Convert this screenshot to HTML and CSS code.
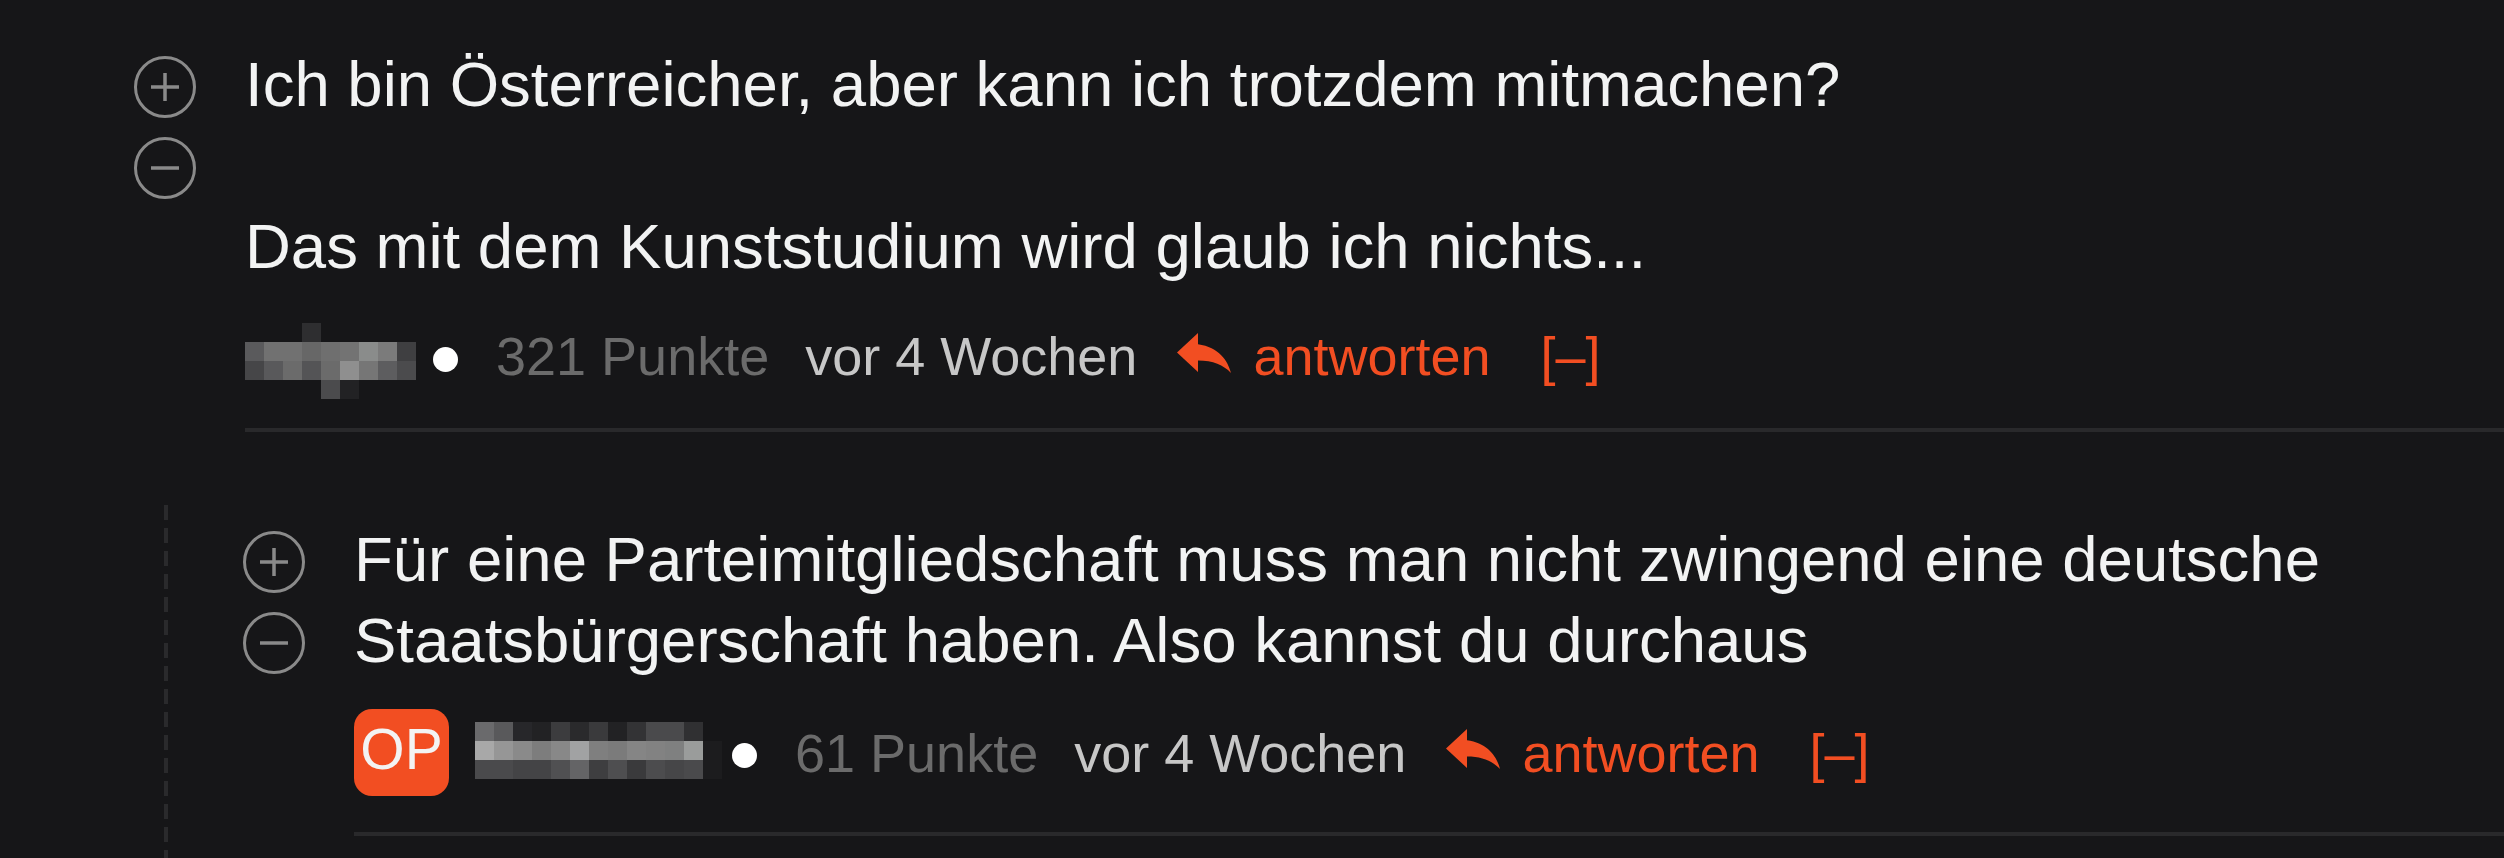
FILE: index.html
```html
<!DOCTYPE html>
<html lang="de">

<head>
    <meta charset="UTF-8">
    <title>Kommentare</title>
    <link rel="stylesheet" href="styles.css">
</head>

<body>
    <div class="thread">
        <div class="comment">
            <div class="comment-toggles">
                <button class="toggle" title="ausklappen">
                    <svg width="62" height="62" viewBox="0 0 62 62">
                        <circle cx="31" cy="31" r="29.5" />
                        <path d="M31 17v28M17 31h28" />
                    </svg>
                </button>
                <button class="toggle" title="einklappen">
                    <svg width="62" height="62" viewBox="0 0 62 62">
                        <circle cx="31" cy="31" r="29.5" />
                        <path d="M17 31h28" />
                    </svg>
                </button>
            </div>
            <div class="comment-body">
                <p>Ich bin Österreicher, aber kann ich trotzdem mitmachen?</p>
                <p>Das mit dem Kunststudium wird glaub ich nichts...</p>
                <div class="comment-meta">
                    <div class="user-blur user-a" data-user="0"></div>
                    <span class="meta-dot"></span>
                    <span class="points">321 Punkte</span>
                    <span class="time">vor 4 Wochen</span>
                    <a class="reply-link" href="#">
                        <svg width="54" height="40" viewBox="0 0 54 40">
                            <path d="M21 11.2V0L0 19.5L21 39V27.6C36 27.6 46.5 32.1 54 40C51 27.9 42 14 21 11.2Z" />
                        </svg>
                        <span>antworten</span>
                    </a>
                    <a class="collapse" href="#">[–]</a>
                </div>
            </div>
        </div>

        <div class="replies">
            <div class="comment reply">
                <div class="comment-toggles">
                    <button class="toggle" title="ausklappen">
                        <svg width="62" height="62" viewBox="0 0 62 62">
                            <circle cx="31" cy="31" r="29.5" />
                            <path d="M31 17v28M17 31h28" />
                        </svg>
                    </button>
                    <button class="toggle" title="einklappen">
                        <svg width="62" height="62" viewBox="0 0 62 62">
                            <circle cx="31" cy="31" r="29.5" />
                            <path d="M17 31h28" />
                        </svg>
                    </button>
                </div>
                <div class="comment-body">
                    <p>Für eine Parteimitgliedschaft muss man nicht zwingend eine deutsche<br>Staatsbürgerschaft haben. Also kannst du durchaus</p>
                    <div class="comment-meta">
                        <span class="op-badge">OP</span>
                        <div class="user-blur user-b" data-user="1"></div>
                        <span class="meta-dot"></span>
                        <span class="points">61 Punkte</span>
                        <span class="time">vor 4 Wochen</span>
                        <a class="reply-link" href="#">
                            <svg width="54" height="40" viewBox="0 0 54 40">
                                <path d="M21 11.2V0L0 19.5L21 39V27.6C36 27.6 46.5 32.1 54 40C51 27.9 42 14 21 11.2Z" />
                            </svg>
                            <span>antworten</span>
                        </a>
                        <a class="collapse" href="#">[–]</a>
                    </div>
                </div>
            </div>
        </div>
    </div>

    <script>
        // verpixelte Benutzernamen
        const pixels = [
            [
                ['', '', '', '#2e2e30', '', '', '', '', ''],
                ['#5a5a5c', '#717171', '#717171', '#676767', '#6f6f6f', '#737373', '#8a8c8b', '#7b7b7b', '#3f3f41'],
                ['#464648', '#59595b', '#6b6b6b', '#545456', '#6b6b6b', '#8f8f8f', '#767676', '#5d5d5f', '#4b4b4d'],
                ['', '', '', '', '#4b4b4d', '#222224', '', '', '']
            ],
            [
                ['#6a6a6c', '#59595b', '#27272a', '#222224', '#3c3c3e', '#2a2a2c', '#3a3a3c', '#222224', '#333335', '#4a4a4c', '#4a4a4c', '#303032', ''],
                ['#a8a8a8', '#969696', '#8a8a8a', '#7d7d7d', '#888888', '#a1a2a3', '#7f7f7f', '#7b7b7b', '#858585', '#828282', '#7f8080', '#9a9c9b', '#1c1c1e'],
                ['#4a4a4c', '#4a4a4c', '#444446', '#444446', '#505052', '#646466', '#3e3e40', '#4e4e50', '#3a3a3c', '#4c4c4e', '#464648', '#4a4a4c', '#1c1c1e']
            ]
        ]

        document.querySelectorAll('.user-blur').forEach(function (box) {
            const rows = pixels[box.dataset.user]
            box.style.gridTemplateColumns = `repeat(${rows[0].length}, 19px)`
            rows.forEach(function (row) {
                row.forEach(function (color) {
                    const cell = document.createElement('span')
                    if (color) {
                        cell.style.background = color
                    }
                    box.appendChild(cell)
                })
            })
        })
    </script>
</body>

</html>
```

FILE: styles.css
```css
* {
    box-sizing: border-box;
}

html,
body {
    margin: 0;
    background: #161618;
}

body {
    font-family: "Liberation Sans", Arial, Helvetica, sans-serif;
    color: #f2f3f3;
}

.thread {
    padding: 44px 0 0 134px;
}

.comment {
    display: flex;
}

.comment-toggles {
    flex: none;
    width: 62px;
    margin-right: 49px;
    padding-top: 12px;
    display: flex;
    flex-direction: column;
    gap: 19px;
}

.toggle {
    appearance: none;
    border: none;
    background: none;
    padding: 0;
    width: 62px;
    height: 62px;
    cursor: pointer;
}

.toggle svg {
    display: block;
    fill: none;
    stroke: #8a8a8a;
}

.toggle circle {
    stroke-width: 3;
}

.toggle path {
    stroke-width: 3.5;
}

.comment-body {
    flex: 1;
    min-width: 0;
    padding-bottom: 41px;
    border-bottom: 4px solid #29292b;
}

.comment-body p {
    margin: 0;
    font-size: 63.5px;
    line-height: 81px;
    color: #f2f3f3;
}

.comment-body p + p {
    margin-top: 81px;
}

.comment-meta {
    margin-top: 38px;
    display: flex;
    align-items: center;
    font-size: 54px;
    line-height: 62px;
    white-space: nowrap;
}

.user-blur {
    display: grid;
    grid-auto-rows: 19px;
}

.user-a {
    margin: -2px 0 -12px;
}

.user-b {
    margin: -4px 0 0 26px;
}

.meta-dot {
    width: 25px;
    height: 25px;
    margin: 6px 0 0 17px;
    border-radius: 50%;
    background: #fff;
}

.user-b + .meta-dot {
    margin-left: 10px;
}

.points {
    margin-left: 38px;
    color: #6b6b6b;
}

.time {
    margin-left: 36px;
    color: #c7c7c7;
}

.reply-link,
.collapse {
    color: #f24e22;
    text-decoration: none;
}

.reply-link {
    margin-left: 40px;
    display: flex;
    align-items: center;
    gap: 22px;
}

.reply-link svg {
    display: block;
    margin-top: -7px;
    fill: #f24e22;
}

.collapse {
    margin-left: 50px;
}

.op-badge {
    width: 95px;
    height: 87px;
    padding-bottom: 6px;
    border-radius: 18px;
    background: #f24e22;
    color: #f3f3f3;
    font-size: 57px;
    line-height: 1;
    display: flex;
    align-items: center;
    justify-content: center;
}

.replies {
    margin: 73px 0 0 30px;
    padding: 14px 0 60px 79px;
    background: repeating-linear-gradient(to bottom, #2a2a2c 0 15px, transparent 15px 23px) no-repeat left top / 4px 100%;
}

.reply .comment-body {
    padding-bottom: 36px;
}

.reply .comment-meta {
    margin-top: 28px;
}
```
